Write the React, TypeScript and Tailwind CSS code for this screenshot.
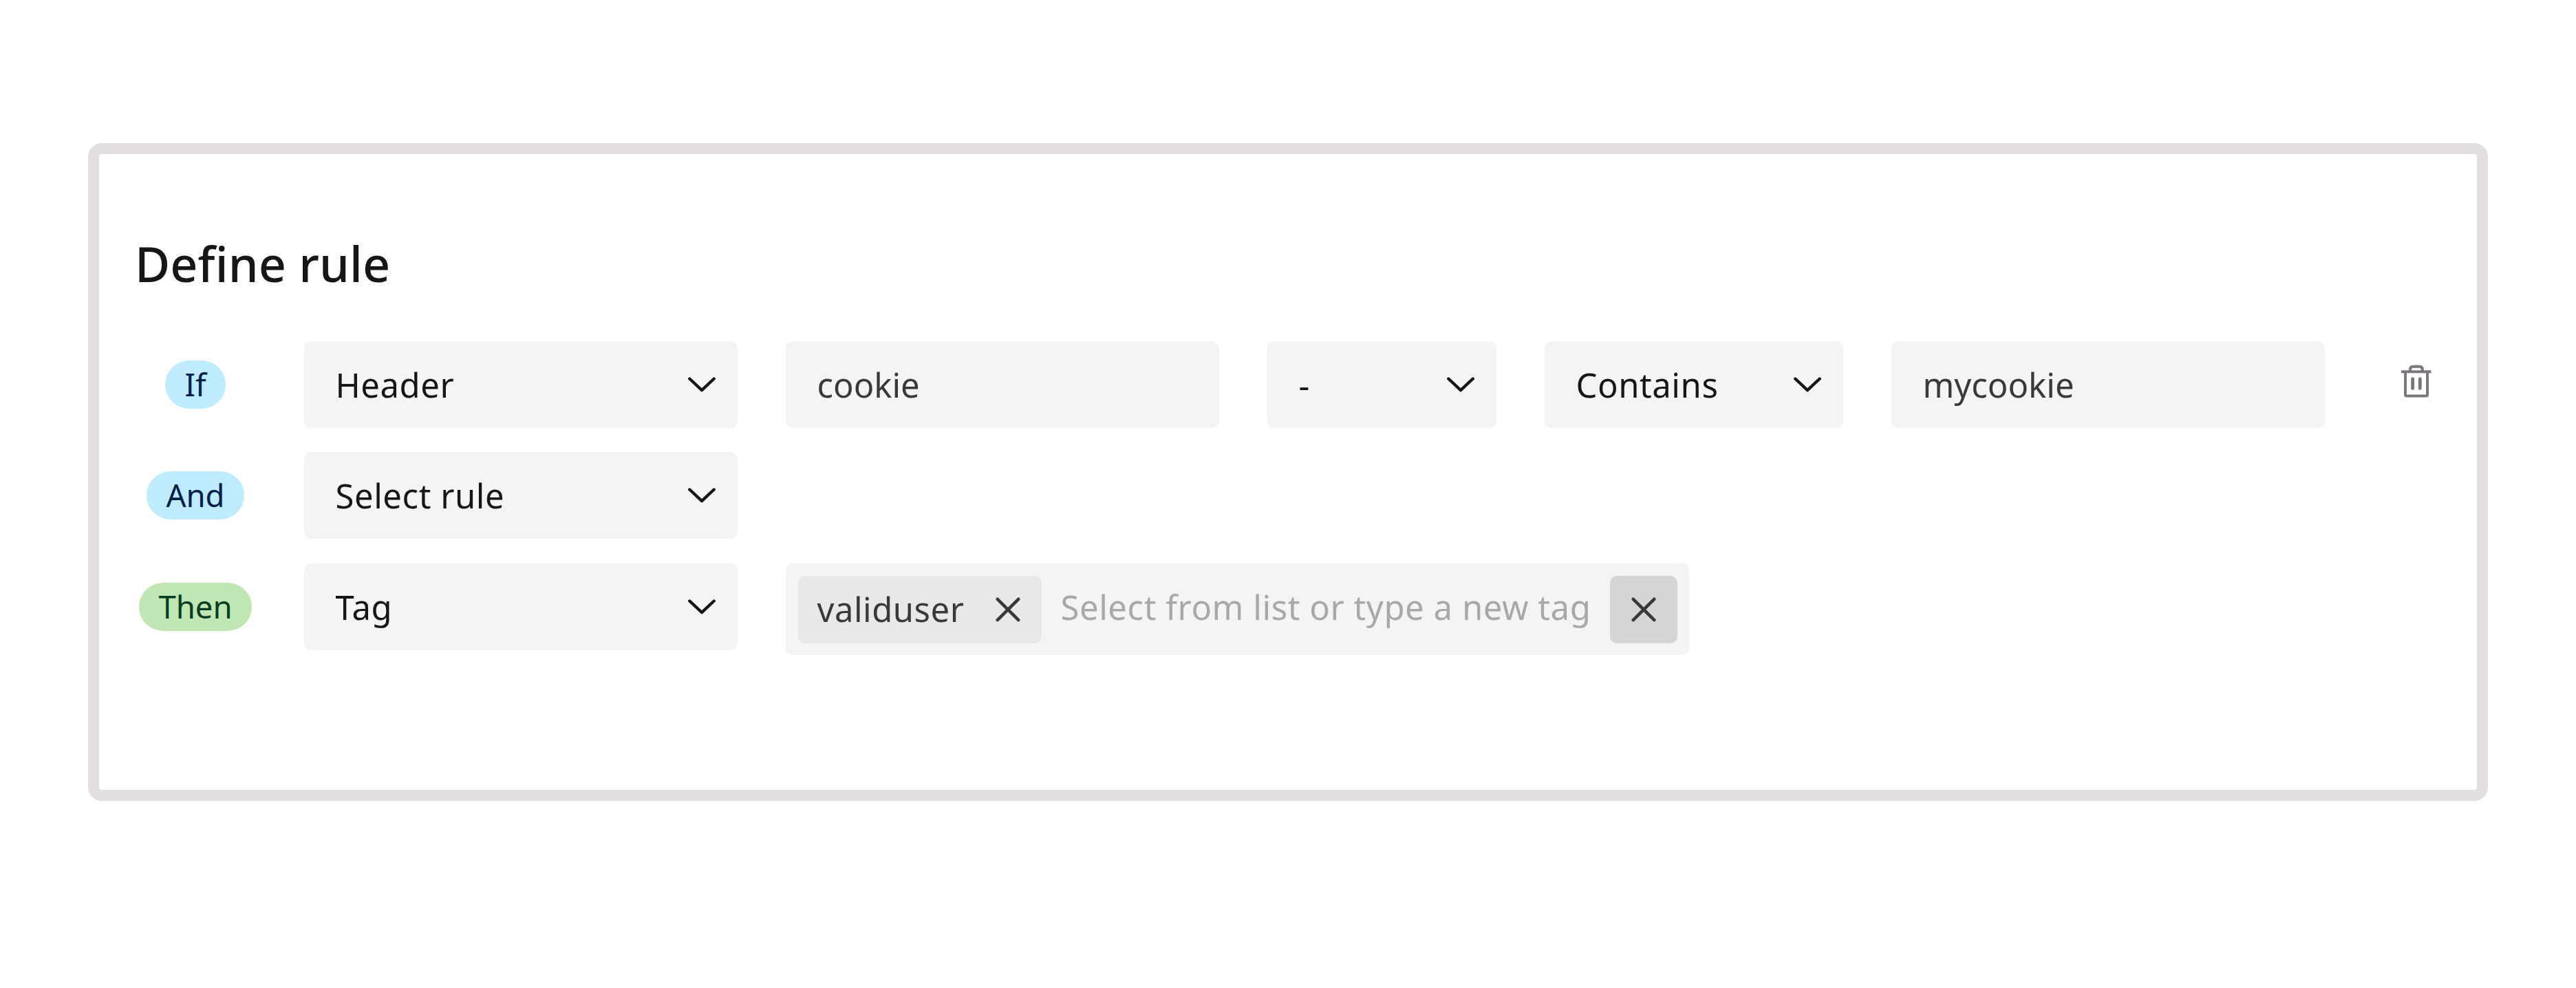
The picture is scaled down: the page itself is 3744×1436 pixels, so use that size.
import type { ReactNode } from "react";

function Chevron() {
  return (
    <svg className="h-[22px] w-10 shrink-0" viewBox="0 0 40 22" fill="none" stroke="currentColor" strokeWidth="4.4" strokeLinecap="round" strokeLinejoin="round">
      <path d="M2.3 2.5 20 19.2 37.7 2.5" />
    </svg>
  );
}

function Cross() {
  return (
    <svg className="size-9 shrink-0" viewBox="0 0 36 36" fill="none" stroke="currentColor" strokeWidth="4.6" strokeLinecap="round">
      <path d="M2.8 2.8 33.2 33.2M33.2 2.8 2.8 33.2" />
    </svg>
  );
}

function Trash() {
  return (
    <svg className="h-12 w-[46px]" viewBox="0 0 46 48" fill="none" stroke="currentColor" strokeWidth="4">
      <path d="M1 10.2H44.4" />
      <path d="M7 10.2V43.4Q7 45.4 9 45.4H37Q39 45.4 39 43.4V10.2" />
      <path d="M14 10V7Q14 2.8 18.2 2.8H27.6Q31.8 2.8 31.8 7V10" />
      <path d="M17.6 20.6V34.4M28.3 20.6V34.4" strokeWidth="4.8" strokeLinecap="round" />
    </svg>
  );
}

function Select({ value, width }: { value: string; width: string }) {
  return (
    <button className={`flex h-[126px] shrink-0 items-center justify-between rounded-[10px] bg-[#f4f4f4] pr-8 pl-[45.5px] text-[49px] leading-none tracking-[0.56px] text-[#161616] ${width}`}>
      <span>{value}</span>
      <Chevron />
    </button>
  );
}

function Field({ value }: { value: string }) {
  return (
    <div className="flex h-[126px] w-[630px] shrink-0 items-center rounded-[10px] bg-[#f4f4f4] pl-[45.5px] text-[49px] leading-none text-[#393939]">
      {value}
    </div>
  );
}

function Row({ label, tone, className, children }: { label: string; tone: string; className: string; children: ReactNode }) {
  return (
    <div className={`flex items-start gap-[70px] ${className}`}>
      <div className="flex h-[126px] w-44 shrink-0 items-center justify-center">
        <span className={`flex h-[70px] items-center rounded-full px-7 text-[45.5px] leading-none ${tone}`}>{label}</span>
      </div>
      {children}
    </div>
  );
}

export default function App() {
  return (
    <main className="h-[1436px] w-[3744px] bg-white px-32 pt-[208px] font-['Noto_Sans',sans-serif]">
      <section className="h-[956px] rounded-[20px] border-16 border-[#e3dfdf] pt-[111px] pl-[52px]">
        <h1 className="h-[96px] text-[70px] leading-[96px] font-medium tracking-[0.12px] text-[#161616]">Define rule</h1>
        <Row label="If" tone="bg-[#bfebff] text-[#001f4a]" className="mt-[65px]">
          <Select value="Header" width="w-[630px]" />
          <Field value="cookie" />
          <Select value="-" width="w-[333px]" />
          <Select value="Contains" width="w-[434px]" />
          <Field value="mycookie" />
          <button className="mt-[34px] ml-10 text-[#7c7580]" aria-label="Delete condition">
            <Trash />
          </button>
        </Row>
        <Row label="And" tone="bg-[#bfebff] text-[#001f4a]" className="mt-[35px]">
          <Select value="Select rule" width="w-[630px]" />
        </Row>
        <Row label="Then" tone="bg-[#c0e6b4] text-[#053d23]" className="mt-9">
          <Select value="Tag" width="w-[630px]" />
          <div className="flex h-[133px] w-[1313px] items-center justify-between rounded-[10px] bg-[#f4f4f4] px-[17.5px] text-[49px] leading-none text-[#393939]">
            <div className="flex items-center gap-7">
              <span className="flex h-[98px] w-[354px] items-center justify-between rounded-[10px] bg-[#e8e8e8] pr-[31px] pl-7 tracking-[0.5px]">
                validuser
                <Cross />
              </span>
              <span className="-mt-[7px] whitespace-nowrap tracking-[0.56px] text-[#a8a8a8]">Select from list or type a new tag</span>
            </div>
            <button className="flex size-[98px] items-center justify-center rounded-[10px] bg-[#d5d5d5]" aria-label="Clear tags">
              <Cross />
            </button>
          </div>
        </Row>
      </section>
    </main>
  );
}
